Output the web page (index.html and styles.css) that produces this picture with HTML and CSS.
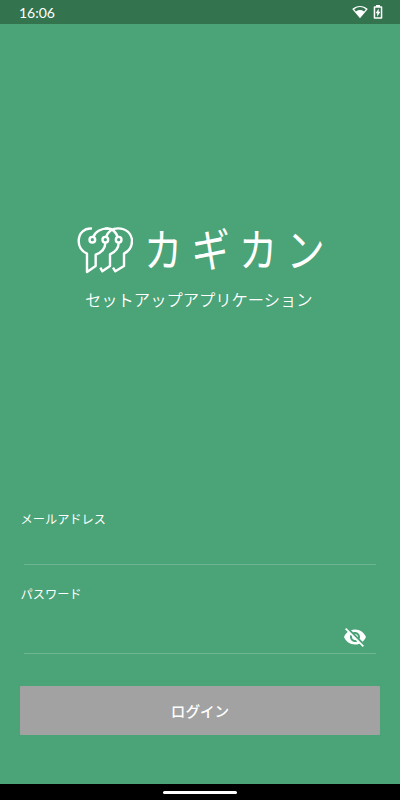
FILE: index.html
```html
<!DOCTYPE html>
<html lang="ja">
<head>
<meta charset="utf-8">
<meta name="viewport" content="width=device-width, initial-scale=1">
<title>カギカン</title>
<link rel="stylesheet" href="styles.css">
</head>
<body>
<header class="status">
  <span class="clock">16:06</span>
  <svg class="wifi" width="16" height="14" viewBox="0 0 16 14"><path fill="#fff" fill-rule="evenodd" d="M.2 4C4.6-.1 11.4-.1 15.8 4L8 13.2zM2.2 4.300l1.700 2.100Q8 3.600 12.100 6.400l1.700-2.100Q8-.3 2.200 4.300z"/></svg>
  <svg class="battery" width="10" height="14" viewBox="0 0 10 14"><path fill="#fff" fill-rule="evenodd" d="M3 0h4v1.200h1.500q.8 0 .8.8v11q0 .8-.8.8h-7Q.7 13.800.7 13V2q0-.8.8-.8H3zM2.200 2.800v9.400h5.600V2.800z"/><path fill="#fff" d="M5.700 3.500v3.300h1.700l-3.200 5V8.200H2.600z"/></svg>
</header>
<main class="screen">
  <section class="brand">
    <div class="brand-row">
      <svg class="keys" width="56" height="47" viewBox="0 0 168 141" fill="none" stroke="#fff" stroke-width="7.2" stroke-linejoin="round">
        <path d="M45 5C24 1 5 18 5 42C5 59 13 72 30 80V135L56 117V83C74 76 85 64 85 47"/>
        <path d="M49 30C54 15 71 4 94 4"/>
        <path d="M87 30C94 12 108 4 123 4C147 4 165 20 165 42C165 60 156 72 141 80V117L115 133L108 122"/>
        <path d="M83 5C106 1 116 13 122 30M125 47C125 65 116 74 99 82V117L76 133L70 122"/>
        <circle cx="46" cy="38" r="8.5"/><circle cx="85" cy="38" r="8.5"/><circle cx="125" cy="38" r="8.5"/>
      </svg>
      <h1 class="wordmark">カギカン</h1>
    </div>
    <p class="subtitle">セットアップアプリケーション</p>
  </section>
  <form class="login">
    <label class="label" for="mail">メールアドレス</label>
    <div class="field mail"><input id="mail" type="email"></div>
    <label class="label" for="pass">パスワード</label>
    <div class="field pass">
      <input id="pass" type="password">
      <svg class="eye" width="24" height="24" viewBox="0 0 24 24" fill="#fff"><path d="M12 7c2.760 0 5 2.240 5 5 0 .65-.13 1.260-.36 1.830l2.920 2.920c1.510-1.260 2.700-2.890 3.430-4.750-1.730-4.390-6-7.500-11-7.500-1.400 0-2.740.25-3.980.7l2.160 2.160C10.740 7.130 11.350 7 12 7zM2 4.270l2.280 2.280.46.46C3.080 8.300 1.780 10.020 1 12c1.730 4.390 6 7.500 11 7.500 1.550 0 3.030-.3 4.380-.84l.42.42L19.730 22 21 20.730 3.270 3 2 4.270zM7.530 9.800l1.550 1.550c-.05.21-.08.43-.08.65 0 1.660 1.340 3 3 3 .22 0 .44-.03.65-.08l1.550 1.550c-.67.33-1.410.53-2.200.53-2.760 0-5-2.240-5-5 0-.79.2-1.530.53-2.200zm4.310-.78l3.150 3.150.02-.16c0-1.660-1.340-3-3-3l-.17.01z"/></svg>
    </div>
    <button class="submit" type="button">ログイン</button>
  </form>
</main>
<footer class="nav"><span class="handle"></span></footer>
</body>
</html>
```

FILE: styles.css
```css
* { box-sizing: border-box; }
body {
  margin: 0;
  height: 800px;
  display: flex;
  flex-direction: column;
  overflow: hidden;
  background: #4ba378;
  color: #fff;
  font-family: "Noto Sans CJK JP", sans-serif;
}
.status {
  height: 24px;
  display: flex;
  align-items: center;
  padding: 0 17px 0 19px;
  background: #33734d;
}
.clock {
  flex: 1;
  font: 400 14px/24px "Lato", sans-serif;
  padding-top: 1px;
}
.battery { margin-left: 5px; }
.screen { flex: 1; display: flex; flex-direction: column; }
.brand { padding-top: 203px; height: 487px; }
.brand-row { display: flex; height: 47px; padding-left: 77px; }
.keys { flex: none; }
.wordmark {
  margin: 0 0 0 11px;
  font-size: 45.5px;
  font-weight: 400;
  line-height: 41px;
  letter-spacing: 11px;
  white-space: nowrap;
  transform: scaleX(.84);
  transform-origin: left;
}
.subtitle {
  margin: 13px 0 0;
  padding-left: 85px;
  font-size: 16.3px;
  font-weight: 350;
  line-height: 24px;
  white-space: nowrap;
}
.login { display: flex; flex-direction: column; padding: 0 20px; }
.label { padding-left: .6px; font-size: 12.2px; line-height: 16px; }
.field {
  display: flex;
  margin: 0 4px;
  border-bottom: 1px solid #6fb593;
}
.field input {
  flex: 1;
  min-width: 0;
  border: 0;
  padding: 0;
  background: none;
  outline: none;
  color: #fff;
}
.mail { height: 38px; margin-bottom: 21px; }
.pass { height: 52px; padding: 23px 9px 0 0; }
.submit {
  height: 49px;
  margin-top: 32px;
  padding: 0;
  border: 0;
  border-radius: 1px;
  background: #a2a2a2;
  color: #fff;
  font: 500 14.6px/47px "Noto Sans CJK JP", sans-serif;
}
.nav {
  height: 16px;
  display: flex;
  justify-content: center;
  align-items: center;
  background: #000;
}
.handle { width: 74px; height: 3px; border-radius: 2px; background: #fff; margin-top: 1px; }
```
